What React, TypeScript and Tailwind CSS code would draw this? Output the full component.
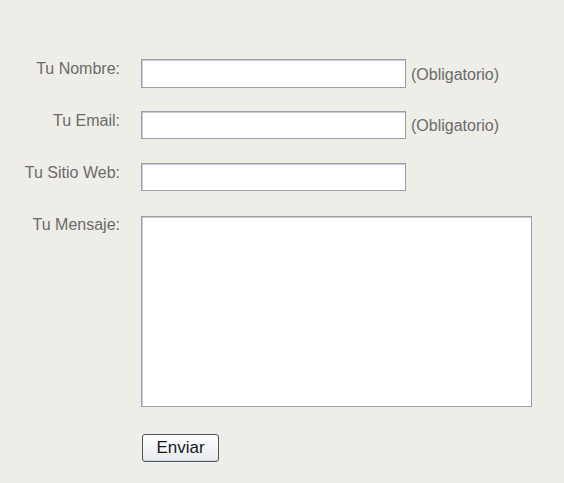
import React from "react";

const labelCls =
  "w-[120px] shrink-0 text-right text-[16px] leading-[18px] text-[#6b6b6b]";
const inputCls =
  "border border-[#9aa0a6] bg-white shadow-[inset_1px_1px_0_#c9ccd0] outline-none";

export default function App() {
  return (
    <div
      className="w-[564px] h-[483px] bg-[#eeede7] overflow-hidden"
      style={{ fontFamily: '"Liberation Sans", Arial, sans-serif' }}
    >
      <div className="flex flex-col pt-[59px]">
        <div className="flex items-start">
          <div className={labelCls + " pt-[1px]"}>Tu Nombre:</div>
          <input className={inputCls + " ml-[21px] w-[265px] h-[29px]"} />
          <span className="ml-[5px] pt-[7px] text-[16px] leading-[18px] text-[#6b6b6b]">
            (Obligatorio)
          </span>
        </div>
        <div className="flex items-start mt-[23px]">
          <div className={labelCls + " pt-[1px]"}>Tu Email:</div>
          <input className={inputCls + " ml-[21px] w-[265px] h-[28px]"} />
          <span className="ml-[5px] pt-[6px] text-[16px] leading-[18px] text-[#6b6b6b]">
            (Obligatorio)
          </span>
        </div>
        <div className="flex items-start mt-[24px]">
          <div className={labelCls + " pt-[1px]"}>Tu Sitio Web:</div>
          <input className={inputCls + " ml-[21px] w-[265px] h-[28px]"} />
        </div>
        <div className="flex items-start mt-[25px]">
          <div className={labelCls}>Tu Mensaje:</div>
          <textarea
            className={inputCls + " ml-[21px] w-[391px] h-[191px] resize-none"}
          />
        </div>
        <div className="flex mt-[27px] pl-[142px]">
          <button className="w-[77px] h-[28px] rounded-[3px] border border-[#4f555c] bg-gradient-to-b from-white to-[#e6eaee] text-[17px] leading-[20px] text-[#1a1a1a] shadow-[inset_0_-1px_0_#d0d6dc]">
            Enviar
          </button>
        </div>
      </div>
    </div>
  );
}
